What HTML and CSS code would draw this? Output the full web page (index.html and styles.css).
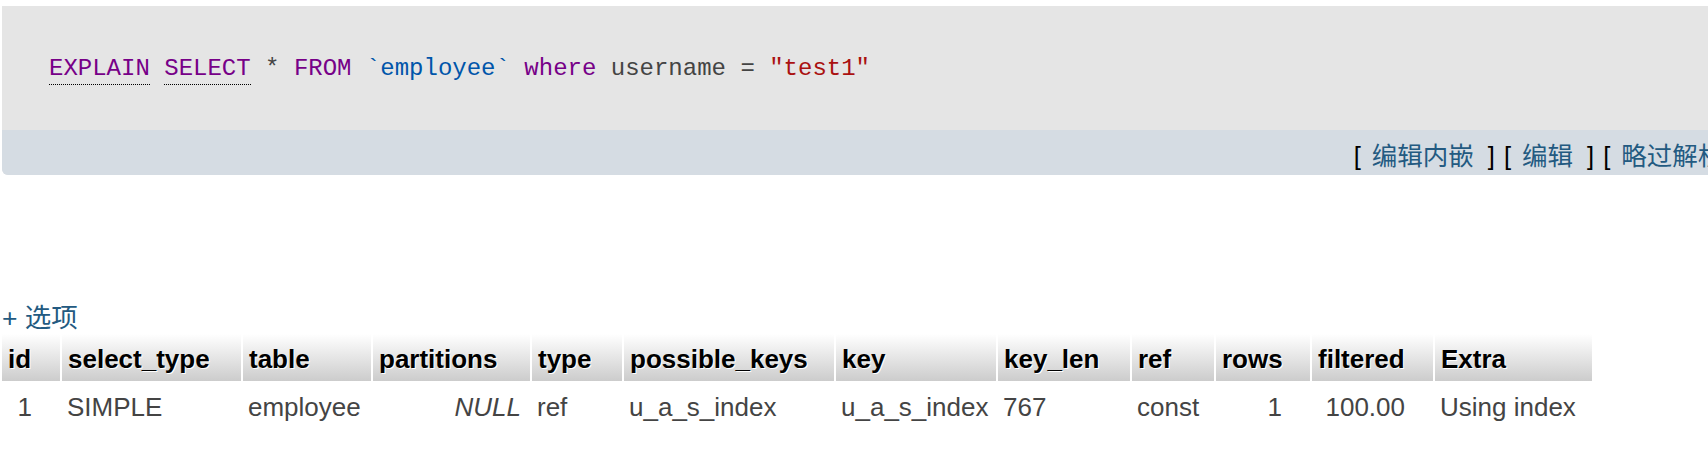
FILE: index.html
```html
<!DOCTYPE html>
<html lang="zh-CN">
<head>
<meta charset="utf-8">
<title>EXPLAIN</title>
<link rel="stylesheet" href="styles.css">
</head>
<body>
<div class="sqlbox">
  <div class="code"><code><span class="kw doc">EXPLAIN</span> <span class="kw doc">SELECT</span> <span class="op">*</span> <span class="kw">FROM</span> <span class="var">`employee`</span> <span class="kw">where</span> <span class="id">username</span> <span class="op">=</span> <span class="str">"test1"</span></code></div>
  <div class="tools">
    <span class="tool">[<a href="#">编辑内嵌</a>]</span>
    <span class="tool">[<a href="#">编辑</a>]</span>
    <span class="tool">[<a href="#">略过解析 SQL</a>]</span>
    <span class="tool">[<a href="#">创建 PHP 代码</a>]</span>
    <span class="tool">[<a href="#">刷新</a>]</span>
  </div>
</div>
<div class="options"><a href="#">+ 选项</a></div>
<table class="result">
  <colgroup>
    <col class="w-id"><col class="w-st"><col class="w-tb"><col class="w-pa"><col class="w-ty"><col class="w-pk">
    <col class="w-ky"><col class="w-kl"><col class="w-rf"><col class="w-rw"><col class="w-fi"><col class="w-ex">
  </colgroup>
  <thead>
    <tr>
      <th>id</th><th>select_type</th><th>table</th><th>partitions</th><th>type</th><th>possible_keys</th>
      <th>key</th><th>key_len</th><th>ref</th><th>rows</th><th>filtered</th><th>Extra</th>
    </tr>
  </thead>
  <tbody>
    <tr>
      <td class="num">1</td><td>SIMPLE</td><td>employee</td><td class="null">NULL</td><td>ref</td><td>u_a_s_index</td>
      <td>u_a_s_index</td><td>767</td><td>const</td><td class="num">1</td><td class="num">100.00</td><td>Using index</td>
    </tr>
  </tbody>
</table>
</body>
</html>
```

FILE: styles.css
```css
html {
  overflow: hidden;
}
body {
  margin: 0;
  padding: 6px 0 0 2px;
  background: #fff;
  font-family: "Liberation Sans", Arial, "Noto Sans CJK SC", sans-serif;
  color: #444;
}
a {
  color: #235a81;
  text-decoration: none;
}
.sqlbox {
  width: 2126px;
  background: #e5e5e5;
  border-radius: 0 0 6px 6px;
}
.code {
  height: 124px;
  display: flex;
  align-items: center;
  padding-left: 47px;
}
.code code {
  font-family: "Liberation Mono", "Courier New", monospace;
  font-size: 24px;
  color: #444;
  white-space: pre;
}
.kw { color: #770088; }
.doc {
  border-bottom: 1px dotted #000;
  padding-bottom: 2px;
}
.var { color: #0055aa; }
.str { color: #aa1111; }
.op, .id { color: #444; }
.tools {
  height: 45px;
  background: #d5dce3;
  border-radius: 0 0 6px 6px;
  display: flex;
  justify-content: flex-end;
  align-items: center;
  gap: 9px;
  padding-right: 10px;
  padding-top: 2px;
  box-sizing: border-box;
  font-family: "Liberation Sans", Arial, "Noto Sans CJK SC", sans-serif;
  font-size: 25.5px;
  color: #000;
}
.tool a {
  margin: 0 14px 0 11px;
}
.options {
  margin-top: 128px;
  font-family: "Liberation Sans", Arial, "Noto Sans CJK SC", sans-serif;
  font-size: 26.5px;
  line-height: 30px;
}
.result {
  margin-left: -2px;
  margin-top: -1px;
  border-collapse: separate;
  border-spacing: 2px;
  table-layout: fixed;
  width: 1594px;
  font-size: 26px;
}
.w-id { width: 58px; }
.w-st { width: 179px; }
.w-tb { width: 128px; }
.w-pa { width: 157px; }
.w-ty { width: 90px; }
.w-pk { width: 210px; }
.w-ky { width: 160px; }
.w-kl { width: 132px; }
.w-rf { width: 82px; }
.w-rw { width: 94px; }
.w-fi { width: 121px; }
.w-ex { width: 157px; }
.result th {
  height: 47px;
  box-sizing: border-box;
  padding: 3px 2px 0 6px;
  text-align: left;
  font-weight: bold;
  color: #000;
  background: linear-gradient(#ffffff, #cccccc);
  text-shadow: 1px 1px 0 #fff;
  white-space: nowrap;
  overflow: hidden;
}
.result td {
  height: 47px;
  box-sizing: border-box;
  padding: 2px 4px 0 5px;
  white-space: nowrap;
  color: #444;
}
.result td.num {
  text-align: right;
  padding-right: 28px;
}
.result td.null {
  text-align: right;
  font-style: italic;
  padding-right: 9px;
}
```
